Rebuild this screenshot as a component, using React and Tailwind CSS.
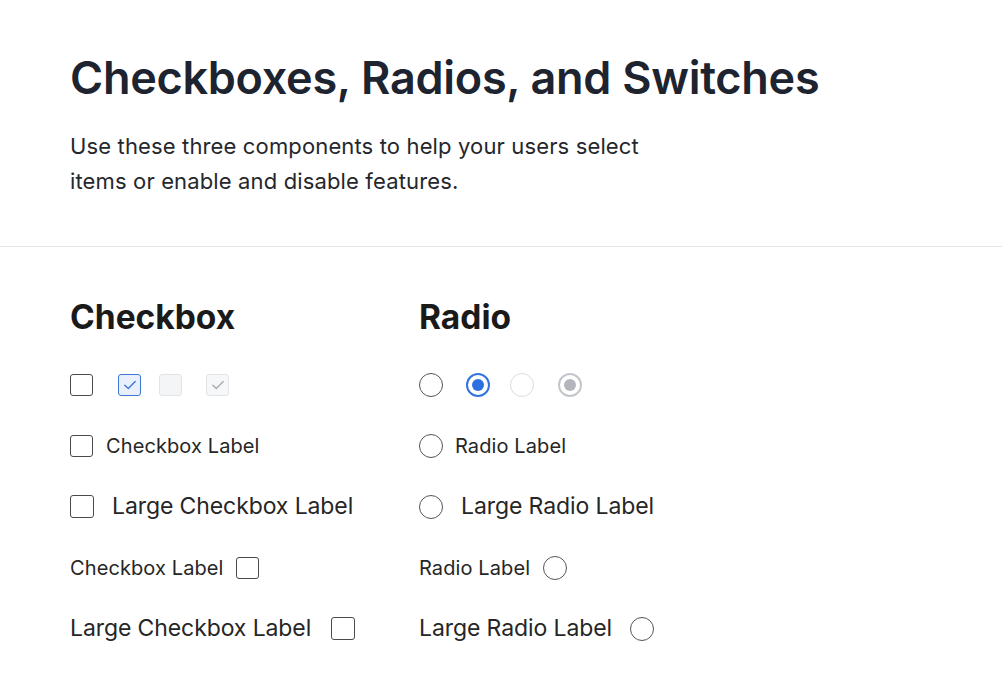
import React from "react";

function Check({ color }) {
  return (
    <svg width="14" height="14" viewBox="0 0 14 14" fill="none">
      <path d="M1.8 7.2 L5.3 10.4 L12.2 3.6" stroke={color} strokeWidth="1.4" strokeLinecap="round" strokeLinejoin="round" />
    </svg>
  );
}

function Box({ variant = "default", size = "md" }) {
  const s = `${size === "lg" ? "w-[24px] h-[23px]" : "w-[23px] h-[22px]"} shrink-0 flex items-center justify-center rounded-[3px] border-[1.5px]`;
  if (variant === "checked")
    return (
      <span className={`${s} border-[#3b78d8] bg-[#e9f0fb]`}>
        <Check color="#3b78d8" />
      </span>
    );
  if (variant === "disabled") return <span className={`${s} border-[#e1e3e7] bg-[#f4f5f7]`} />;
  if (variant === "disabledChecked")
    return (
      <span className={`${s} border-[#e1e3e7] bg-[#f6f7f8]`}>
        <Check color="#a8acb2" />
      </span>
    );
  return <span className={`${s} border-[#4a4a4a] bg-white`} />;
}

function Radio({ variant = "default" }) {
  const s = "w-[24px] h-[24px] shrink-0 rounded-full flex items-center justify-center";
  if (variant === "checked")
    return (
      <span className={`${s} border-2 border-[#3373de] bg-white`}>
        <span className="w-[12px] h-[12px] rounded-full bg-[#2e6fdf]" />
      </span>
    );
  if (variant === "disabled") return <span className={`${s} border-[1.5px] border-[#dcdcdc] bg-white`} />;
  if (variant === "disabledChecked")
    return (
      <span className={`${s} border-2 border-[#c3c6cb] bg-white`}>
        <span className="w-[12px] h-[12px] rounded-full bg-[#b2b6bc]" />
      </span>
    );
  return <span className={`${s} border-[1.5px] border-[#555555] bg-white`} />;
}

const Row = ({ children }) => <div className="h-[61px] flex items-center">{children}</div>;

export default function App() {
  return (
    <div className="min-h-screen bg-white font-['Inter',sans-serif] text-[#262626]">
      <header className="px-[70px] pt-[51px] pb-[47px] border-b border-[#e6e7ea]">
        <h1 className="text-[45px] leading-[54px] font-semibold tracking-[-0.28px] text-[#1e2330]">
          Checkboxes, Radios, and Switches
        </h1>
        <p className="mt-[24px] text-[22px] leading-[35px] tracking-[0.14px] text-[#25272c] max-w-[590px]">
          Use these three components to help your users select items or enable and disable features.
        </p>
      </header>
      <main className="px-[70px] pt-[50px] flex">
        <section className="w-[349px] shrink-0">
          <h2 className="text-[33.5px] leading-[40px] font-bold text-[#1a1a1a] mb-[17px]">Checkbox</h2>
          <Row>
            <Box />
            <span className="ml-[25px] flex"><Box variant="checked" /></span>
            <span className="ml-[18px] flex"><Box variant="disabled" /></span>
            <span className="ml-[24px] flex"><Box variant="disabledChecked" /></span>
          </Row>
          <Row>
            <Box />
            <span className="ml-[13px] text-[20px] tracking-[0.1px]">Checkbox Label</span>
          </Row>
          <Row>
            <Box size="lg" />
            <span className="ml-[18px] text-[23px] tracking-[-0.1px]">Large Checkbox Label</span>
          </Row>
          <Row>
            <span className="mr-[12px] text-[20px] tracking-[0.1px]">Checkbox Label</span>
            <Box />
          </Row>
          <Row>
            <span className="mr-[20px] text-[23px] tracking-[-0.1px]">Large Checkbox Label</span>
            <Box size="lg" />
          </Row>
        </section>
        <section>
          <h2 className="text-[33.5px] leading-[40px] font-bold text-[#1a1a1a] mb-[17px]">Radio</h2>
          <Row>
            <Radio />
            <span className="ml-[23px] flex"><Radio variant="checked" /></span>
            <span className="ml-[20px] flex"><Radio variant="disabled" /></span>
            <span className="ml-[24px] flex"><Radio variant="disabledChecked" /></span>
          </Row>
          <Row>
            <Radio />
            <span className="ml-[12px] text-[20px] tracking-[0.1px]">Radio Label</span>
          </Row>
          <Row>
            <Radio />
            <span className="ml-[18px] text-[23px] tracking-[-0.1px]">Large Radio Label</span>
          </Row>
          <Row>
            <span className="mr-[13px] text-[20px] tracking-[0.1px]">Radio Label</span>
            <Radio />
          </Row>
          <Row>
            <span className="mr-[18px] text-[23px] tracking-[-0.1px]">Large Radio Label</span>
            <Radio />
          </Row>
        </section>
      </main>
    </div>
  );
}
